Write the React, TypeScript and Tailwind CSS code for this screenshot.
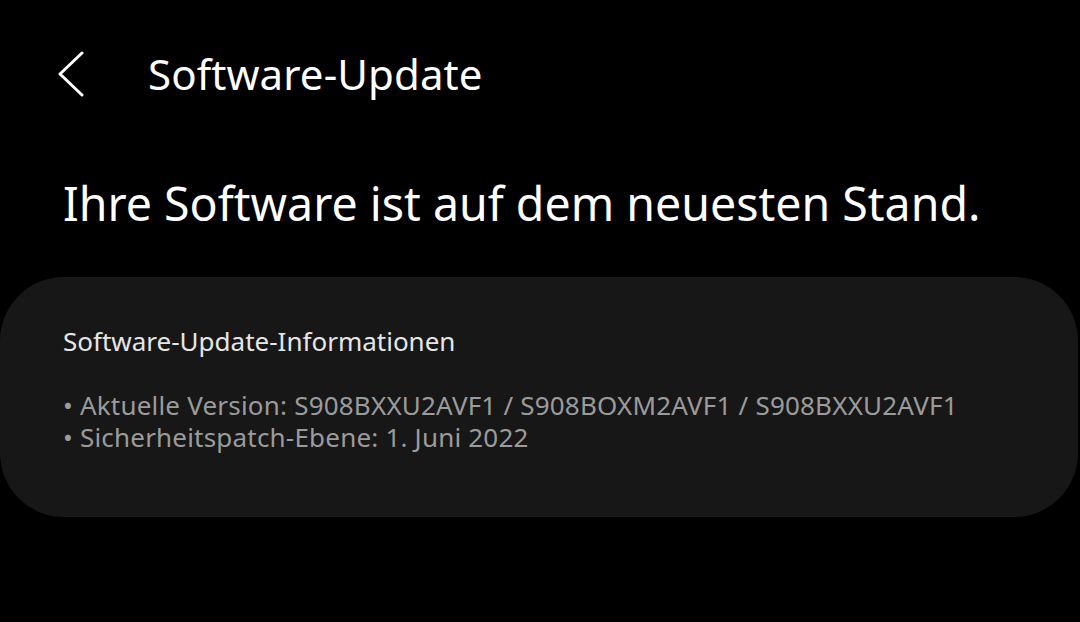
import React from "react"

const BackIcon = () => (
    <svg width="30" height="46" viewBox="0 0 30 46" fill="none">
        <path
            d="M26 2 L4 23 L26 44"
            stroke="white"
            strokeWidth="3"
            strokeLinecap="round"
            strokeLinejoin="round"
        />
    </svg>
)

const App: React.FC = () => {
    return (
        <div
            className="w-[1080px] h-[622px] bg-black text-white overflow-hidden"
            style={{ fontFamily: '"Noto Sans", "Open Sans", sans-serif' }}
        >
            <div className="flex items-center h-[150px] pl-[56px] pb-[2px]">
                <BackIcon />
                <h1 className="ml-[62px] text-[42px] leading-none tracking-[0.1px]">
                    Software-Update
                </h1>
            </div>
            <div className="pl-[63px] h-[127px] pt-[30px]">
                <p className="text-[46.5px] leading-none">
                    Ihre Software ist auf dem neuesten Stand.
                </p>
            </div>
            <div className="mr-[2px] h-[240px] rounded-[64px] bg-[#171717] pl-[63px] pt-[48px]">
                <p className="text-[26px] leading-[32px] text-[#e6e6e6]">
                    Software-Update-Informationen
                </p>
                <ul className="mt-[32px] text-[26px] leading-[32px] text-[#9b9b9b] tracking-[0.2px]">
                    <li>• Aktuelle Version: S908BXXU2AVF1 / S908BOXM2AVF1 / S908BXXU2AVF1</li>
                    <li>• Sicherheitspatch-Ebene: 1. Juni 2022</li>
                </ul>
            </div>
        </div>
    )
}

export default App
